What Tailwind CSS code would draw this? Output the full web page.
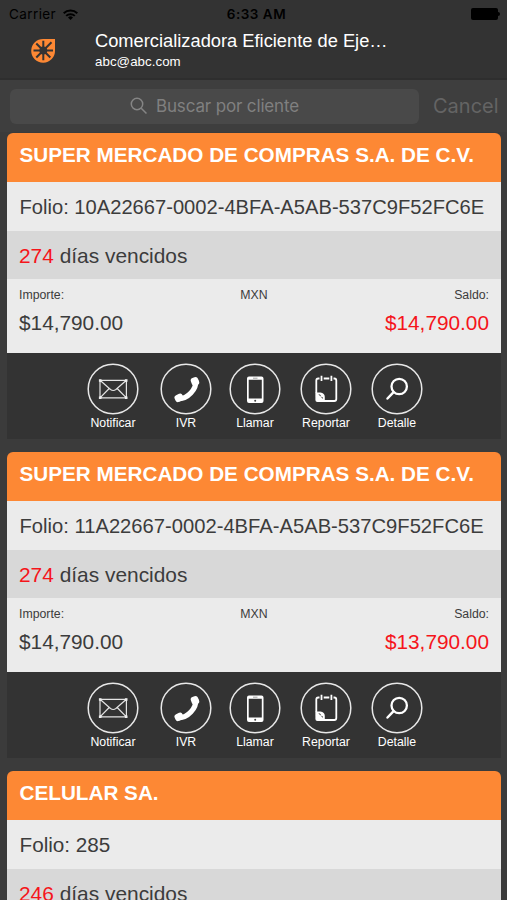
<!DOCTYPE html>
<html lang="es">
<head>
<meta charset="utf-8">
<title>Clientes</title>
<script src="https://cdn.jsdelivr.net/npm/@tailwindcss/browser@4"></script>
</head>
<body class="w-[507px] h-[900px] overflow-hidden bg-[#3b3b3b] font-['Liberation_Sans',sans-serif] text-[#3c3c3c]">
<svg class="hidden">
  <symbol id="notificar" viewBox="0 0 52 52"><g fill="none" stroke="#e4e4e4" stroke-width="1.2"><circle cx="26" cy="26" r="24.8" stroke-width="1.5" stroke="#e8e8e8"/><path d="M13 17.300h26.400v17.600H13zM13 17.300L23.500 26.500q2.700 2 5.400 0L39.400 17.300M13 34.900l9.200-9.400M39.400 34.900l-9.200-9.400"/></g><path d="M11.900 16.200h2.600v2.600h-2.600zM37.900 16.200h2.600v2.600h-2.600zM11.900 33.500h2.600v2.600h-2.600zM37.900 33.500h2.600v2.600h-2.600z" fill="#eee"/></symbol>
  <symbol id="ivr" viewBox="0 0 52 52"><circle cx="26" cy="26" r="24.8" fill="none" stroke="#e8e8e8" stroke-width="1.5"/><path d="M35.800 18C36.500 26.500 27.500 35.500 19 35.800" fill="none" stroke="#fff" stroke-width="5.200" stroke-linecap="round"/><rect x="31" y="14.300" width="7.600" height="8.200" rx="2.700" fill="#fff" transform="rotate(-22 35 18)"/><rect x="14.800" y="31.200" width="8.600" height="7.300" rx="2.700" fill="#fff" transform="rotate(-24 19 35)"/></symbol>
  <symbol id="llamar" viewBox="0 0 52 52"><circle cx="26" cy="26" r="24.800" fill="none" stroke="#e8e8e8" stroke-width="1.5"/><path fill="#fff" fill-rule="evenodd" d="M20 13.500h12.500a2 2 0 0 1 2 2v22.500a2 2 0 0 1-2 2H20a2 2 0 0 1-2-2V15.500a2 2 0 0 1 2-2zM19.700 16.800v18.700h13.100V16.800z"/><path d="M24 15.200h4.500" stroke="#888" stroke-width=".8"/><circle cx="26.200" cy="37.800" r="1" fill="#444"/></symbol>
  <symbol id="reportar" viewBox="0 0 52 52"><g fill="none" stroke="#fff" stroke-width="1.800"><circle cx="26" cy="26" r="24.800" stroke-width="1.500" stroke="#e8e8e8"/><path d="M19.500 15.500h-1.200a2 2 0 0 0-2 2V30M23.700 15.500h5.600M33.500 15.500h.8a2 2 0 0 1 2 2v18.500a2 2 0 0 1-2 2H24M21.500 12.800v5.200M31.400 12.800v5.200"/></g><path fill="#fff" d="M15.400 29.500h5q4.400.5 4.400 4.500v4.900h-7.400a2 2 0 0 1-2-2z"/><path d="M18.300 31.300c2.400 0 2.700 1.300 2.300 2.500 1.400-.2 2.500.4 2.500 2.200z" fill="#333"/></symbol>
  <symbol id="detalle" viewBox="0 0 52 52"><g fill="none" stroke="#fff"><circle cx="26" cy="26" r="24.800" stroke-width="1.500" stroke="#e8e8e8"/><circle cx="28.200" cy="23.500" r="7.700" stroke-width="2.300"/><path d="M22.600 29.200l-6.100 6.300" stroke-width="2.500" stroke-linecap="round"/></g></symbol>
</svg>

<header class="h-[80px] bg-[#333] border-b-2 border-[#2e2e2e]">
  <div class="h-[28px] px-[9px] pr-[7px] grid grid-cols-3 items-center text-black font-['Inter',sans-serif]">
    <div class="flex items-center gap-[7px] text-[13.500px] tracking-[.4px]">Carrier
      <svg width="15" height="11" viewBox="0 0 15 11" fill="none" stroke="#000" stroke-width="2"><path d="M.7 4.200a9.700 9.700 0 0 1 13.600 0M3.200 6.900a6.200 6.200 0 0 1 8.600 0"/><path d="M7.500 11L5 8.500a3.500 3.500 0 0 1 5 0z" fill="#000" stroke="none"/></svg>
    </div>
    <div class="text-center text-[13.500px] font-semibold whitespace-nowrap tracking-[.5px] pl-[4px]">6:33 AM</div>
    <div class="flex justify-end items-center"><span class="w-[27px] h-[12px] rounded-[2px] bg-black"></span><span class="w-[2px] h-[4px] rounded-r bg-black"></span></div>
  </div>
  <div class="flex pl-[31px]">
    <svg class="mt-[10px] w-[25px] h-[25px]" viewBox="0 0 25 25"><path fill="#fd8834" d="M12.500 1H24v11.500A11.900 11.900 0 1 1 12.500 1z"/><g stroke="#333" stroke-width="2"><path d="M12.300 2.800v19.500M2.500 12.500H22M5.300 5.500l14 14M20.500 4.200L5.300 19.500"/></g><circle cx="12.300" cy="12.500" r="3.900" fill="#333"/></svg>
    <div class="ml-[39px] text-white">
      <div class="text-[18.300px] leading-[26px] whitespace-nowrap">Comercializadora Eficiente de Eje…</div>
      <div class="text-[13.300px] leading-[15px] tracking-[.05px]">abc@abc.com</div>
    </div>
  </div>
</header>

<div class="h-[52px] flex items-center pl-[10px] bg-[#3e3e3e] font-['Inter',sans-serif]">
  <div class="w-[409px] h-[35px] rounded-[6px] bg-[#494949] flex items-center justify-center gap-[8px] text-[#808080] text-[17px]">
    <svg width="18" height="18" viewBox="0 0 18 18" fill="none" stroke="#858585" stroke-width="1.500"><circle cx="7" cy="7" r="5.700"/><path d="M11.200 11.200l5.300 5.300"/></svg>
    <span class="pt-px tracking-[-.15px]">Buscar por cliente</span>
  </div>
  <div class="ml-[14px] text-[20px] text-[#646464]">Cancel</div>
</div>

<main class="px-[7px] pt-[1px] flex flex-col gap-[13px]">
  <article class="w-[494px] h-[306px] shrink-0">
    <h2 class="h-[49px] pl-[12.500px] pt-[9px] rounded-t-[6px] bg-[#fd8834] text-white font-bold text-[20.700px] leading-[25px] whitespace-nowrap">SUPER MERCADO DE COMPRAS S.A. DE C.V.</h2>
    <p class="h-[49px] pl-[12.500px] bg-[#ebebeb] text-[20.150px] leading-[51px] whitespace-nowrap">Folio: 10A22667-0002-4BFA-A5AB-537C9F52FC6E</p>
    <p class="h-[48px] pl-[12px] bg-[#d8d8d8] text-[20.900px] leading-[49px]"><span class="text-[#f5151b]">274</span> días vencidos</p>
    <div class="h-[74px] px-[12px] pt-[8px] bg-[#ebebeb]">
      <div class="grid grid-cols-3 text-[12.300px] leading-[16px]"><span>Importe:</span><span class="text-center">MXN</span><span class="text-right">Saldo:</span></div>
      <div class="flex justify-between text-[20.800px] leading-[39px]"><span>$14,790.00</span><span class="text-[#f5151b]">$14,790.00</span></div>
    </div>
    <div class="h-[86px] pt-[10px] pl-[80px] bg-[#333] flex text-white text-[12.300px] leading-[17px]">
      <div class="w-[52px] mr-[21px] flex flex-col items-center"><svg class="w-[52px] h-[52px]"><use href="#notificar"/></svg>Notificar</div>
      <div class="w-[52px] mr-[17px] flex flex-col items-center"><svg class="w-[52px] h-[52px]"><use href="#ivr"/></svg>IVR</div>
      <div class="w-[52px] mr-[19px] flex flex-col items-center"><svg class="w-[52px] h-[52px]"><use href="#llamar"/></svg>Llamar</div>
      <div class="w-[52px] mr-[19px] flex flex-col items-center"><svg class="w-[52px] h-[52px]"><use href="#reportar"/></svg>Reportar</div>
      <div class="w-[52px] flex flex-col items-center"><svg class="w-[52px] h-[52px]"><use href="#detalle"/></svg>Detalle</div>
    </div>
  </article>
  <article class="w-[494px] h-[306px] shrink-0">
    <h2 class="h-[49px] pl-[12.500px] pt-[9px] rounded-t-[6px] bg-[#fd8834] text-white font-bold text-[20.700px] leading-[25px] whitespace-nowrap">SUPER MERCADO DE COMPRAS S.A. DE C.V.</h2>
    <p class="h-[49px] pl-[12.500px] bg-[#ebebeb] text-[20.200px] leading-[51px] whitespace-nowrap">Folio: 11A22667-0002-4BFA-A5AB-537C9F52FC6E</p>
    <p class="h-[48px] pl-[12px] bg-[#d8d8d8] text-[20.900px] leading-[49px]"><span class="text-[#f5151b]">274</span> días vencidos</p>
    <div class="h-[74px] px-[12px] pt-[8px] bg-[#ebebeb]">
      <div class="grid grid-cols-3 text-[12.300px] leading-[16px]"><span>Importe:</span><span class="text-center">MXN</span><span class="text-right">Saldo:</span></div>
      <div class="flex justify-between text-[20.800px] leading-[39px]"><span>$14,790.00</span><span class="text-[#f5151b]">$13,790.00</span></div>
    </div>
    <div class="h-[86px] pt-[10px] pl-[80px] bg-[#333] flex text-white text-[12.300px] leading-[17px]">
      <div class="w-[52px] mr-[21px] flex flex-col items-center"><svg class="w-[52px] h-[52px]"><use href="#notificar"/></svg>Notificar</div>
      <div class="w-[52px] mr-[17px] flex flex-col items-center"><svg class="w-[52px] h-[52px]"><use href="#ivr"/></svg>IVR</div>
      <div class="w-[52px] mr-[19px] flex flex-col items-center"><svg class="w-[52px] h-[52px]"><use href="#llamar"/></svg>Llamar</div>
      <div class="w-[52px] mr-[19px] flex flex-col items-center"><svg class="w-[52px] h-[52px]"><use href="#reportar"/></svg>Reportar</div>
      <div class="w-[52px] flex flex-col items-center"><svg class="w-[52px] h-[52px]"><use href="#detalle"/></svg>Detalle</div>
    </div>
  </article>
  <article class="w-[494px] shrink-0">
    <h2 class="h-[49px] pl-[12.500px] pt-[9px] rounded-t-[6px] bg-[#fd8834] text-white font-bold text-[20.700px] leading-[25px] whitespace-nowrap">CELULAR SA.</h2>
    <p class="h-[49px] pl-[12.500px] bg-[#ebebeb] text-[20.700px] leading-[49px] whitespace-nowrap">Folio: 285</p>
    <p class="h-[48px] pl-[12px] bg-[#d8d8d8] text-[20.900px] leading-[49px]"><span class="text-[#f5151b]">246</span> días vencidos</p>
  </article>
</main>
</body>
</html>
